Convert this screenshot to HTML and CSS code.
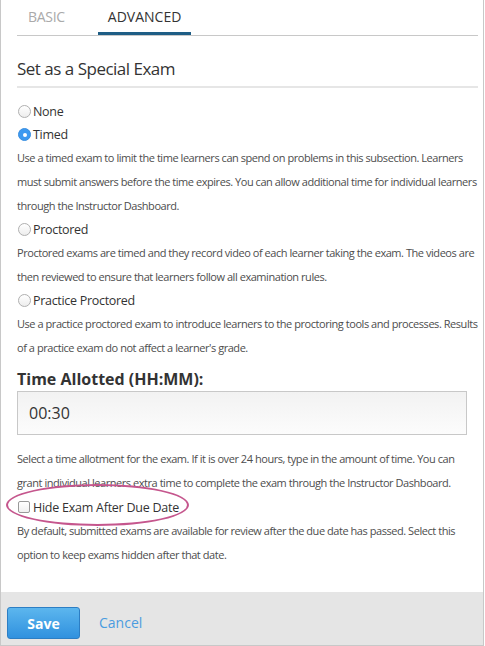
FILE: index.html
```html
<!DOCTYPE html>
<html>
<head>
<meta charset="utf-8">
<link rel="stylesheet" href="styles.css">
</head>
<body>
<div class="modal">
  <div class="body">
    <div class="tabs">
      <span class="tab">BASIC</span>
      <span class="tab active">ADVANCED</span>
    </div>
    <h2 class="title">Set as a Special Exam</h2>
    <div class="opt"><span class="radio"></span>None</div>
    <div class="opt"><span class="radio on"></span>Timed</div>
    <p class="desc">Use a timed exam to limit the time learners can spend on problems in this subsection. Learners must submit answers before the time expires. You can allow additional time for individual learners through the Instructor Dashboard.</p>
    <div class="opt"><span class="radio"></span>Proctored</div>
    <p class="desc">Proctored exams are timed and they record video of each learner taking the exam. The videos are then reviewed to ensure that learners follow all examination rules.</p>
    <div class="opt"><span class="radio"></span>Practice Proctored</div>
    <p class="desc">Use a practice proctored exam to introduce learners to the proctoring tools and processes. Results of a practice exam do not affect a learner's grade.</p>
    <div class="label">Time Allotted (HH:MM):</div>
    <div class="input">00:30</div>
    <p class="desc">Select a time allotment for the exam. If it is over 24 hours, type in the amount of time. You can grant individual learners extra time to complete the exam through the Instructor Dashboard.</p>
    <div class="check-row">
      <span class="check"></span>Hide Exam After Due Date
      <span class="ring"></span>
    </div>
    <p class="desc">By default, submitted exams are available for review after the due date has passed. Select this option to keep exams hidden after that date.</p>
  </div>
  <div class="footer">
    <span class="save">Save</span>
    <span class="cancel">Cancel</span>
  </div>
</div>
</body>
</html>
```
FILE: styles.css
```css
html, body {
  margin: 0;
  padding: 0;
  background: #fff;
}
body {
  font-family: "Open Sans", "DejaVu Sans", sans-serif;
  color: #333;
}
.modal {
  width: 482px;
  height: 645px;
  border: 1px solid #c8c8c8;
  border-top: none;
  display: flex;
  flex-direction: column;
}
.body {
  flex: 1;
  padding: 0 5px 0 16px;
}
.tabs {
  display: flex;
  height: 35px;
  border-bottom: 1px solid #c8c8c8;
}
.tab {
  font-size: 14px;
  line-height: 34px;
  color: #aaa;
  padding: 0 11px;
  margin-right: 22px;
  letter-spacing: -0.3px;
}
.tab.active {
  color: #333;
  border-bottom: 3px solid #1e5d85;
  height: 32px;
  padding: 0 10px;
  letter-spacing: 0;
}
.title {
  margin: 16px 0 0;
  font-size: 17px;
  font-weight: 400;
  line-height: 34px;
  letter-spacing: -0.5px;
  border-bottom: 2px solid #e6e6e6;
  color: #333;
}
.opt {
  display: flex;
  align-items: center;
  font-size: 12.5px;
  letter-spacing: -0.3px;
  height: 23px;
  color: #333;
}
.title + .opt { margin-top: 12px; }
.radio {
  width: 13px;
  height: 13px;
  border-radius: 50%;
  border: 1px solid #b0b0b0;
  margin: 0 2px 0 1px;
  box-sizing: border-box;
  background: linear-gradient(#fff, #ededed);
  position: relative;
  flex: none;
}
.radio.on {
  background: #3d99f0;
  border-color: #3a8fe0;
}
.radio.on::after {
  content: "";
  position: absolute;
  width: 4px;
  height: 4px;
  border-radius: 50%;
  background: #fff;
  left: 3.5px;
  top: 3.5px;
}
.desc {
  margin: 0;
  font-size: 11px;
  letter-spacing: -0.45px;
  line-height: 24px;
  color: #4d4d4d;
}
.label {
  margin-top: 8px;
  font-size: 16px;
  font-weight: 700;
  line-height: 22px;
  color: #333;
}
.input {
  margin-top: 1px;
  height: 42px;
  border: 1px solid #c8c8c8;
  background: linear-gradient(#f2f2f2, #fcfcfc);
  font-size: 16px;
  line-height: 42px;
  padding-left: 11px;
  margin-bottom: 12px;
  width: 437px;
}
.check-row {
  position: relative;
  display: flex;
  align-items: center;
  font-size: 12.5px;
  letter-spacing: -0.25px;
  height: 24px;
  color: #333;
}
.check {
  width: 12px;
  height: 12px;
  border: 1px solid #999;
  border-radius: 2px;
  margin: 0 3px 0 1px;
  box-sizing: border-box;
  background: linear-gradient(#fff, #f0f0f0);
}
.ring {
  position: absolute;
  left: -11px;
  top: -11px;
  width: 183px;
  height: 42px;
  border: 2px solid #c5568d;
  border-radius: 50%;
  box-sizing: border-box;
}
.footer {
  height: 38px;
  background: #e5e5e5;
  display: flex;
  align-items: flex-start;
  padding: 15px 0 0 6px;
}
.save {
  width: 71px;
  height: 30px;
  border: 1px solid #2c7ec4;
  border-radius: 3px;
  background: linear-gradient(#5cb6ee, #3091df);
  color: #fff;
  font-weight: 700;
  font-size: 14px;
  display: flex;
  align-items: center;
  justify-content: center;
}
.cancel {
  margin-left: 19px;
  line-height: 32px;
  color: #4a9ce0;
  font-size: 14px;
}
```
